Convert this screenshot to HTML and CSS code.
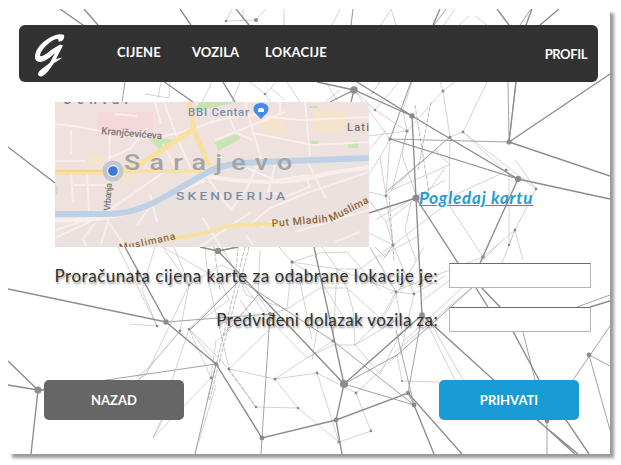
FILE: index.html
```html
<!DOCTYPE html>
<html lang="bs">
<head>
<meta charset="utf-8">
<title>Karta</title>
<link rel="stylesheet" href="styles.css">
</head>
<body>
<main class="panel">
  <svg class="network" viewBox="8 9 602 445" aria-hidden="true">
    <g class="faint">
      <path d="M226 21L256 20L266 9M226 21L232 9M284 9V25M243 9V20M332 25L340 9M353 9L351 25M381 25L391 9L396 25M444 25L455 9M459 25L469 16M475 16L487 25M223 82L235 102M212 82L202 102M161 82L158 98M170 82L169 98L145 94M240 82L232 102M250 82L265 94L271 102M265 94L271 88L276 82M271 88L285 100M287 82L300 102M326 82L338 102M340 90L325 102"/>
      <path d="M399 82L375 110L407 131L369 136M375 110L354 90M411 82L390 139L354 90M412 82L403 110L407 131L443 91L440 82M443 91L450 137L449 205L483 257M443 91L455 82M450 137L463 132L487 82M463 132L536 189L515 230L509 245L502 263M463 132L509 175L509 245M515 160L536 189M449 165L392 190L386 196L393 245L369 233M407 131L392 190M390 139L386 196L369 192M380 157L390 139M407 131L402 155L418 200M380 157L369 174M380 157L386 196M450 165L435 150L391 190M445 168L420 203M509 170L450 197M393 245L445 205M393 245L386 222L369 200M375 220L445 180M393 245L383 260M411 202L405 230L416 260M386 222L420 195M369 150L386 130M509 245L515 230L483 257L488 245M483 257L390 293M380 257L420 235M480 263L498 245M515 230L523 260"/>
      <path d="M118 247L157 326L129 324M189 285L146 375L137 380M180 331L139 380M180 331L149 367L136 378M155 247L142 290L157 326M189 329L172 380M163 247L189 285L180 331M189 285L221 265L246 276M189 285L174 247M163 247L220 280L229 300L189 329L216 364M189 329L221 360L256 407L298 408L275 379L317 373L356 393L371 431L339 442L317 373M298 408L339 442M205 247L208 280L220 330L229 369L275 379L333 341M229 369L269 330M222 247L240 280L246 295L287 309L292 262L279 247M292 262L337 269L396 292L414 294L445 276M337 269L322 247M337 269L335 305L333 341M287 309L320 288L347 288L337 269M287 309L270 314L258 295L218 340M307 358L270 320L240 280L210 308L189 329M307 358L333 345L355 345L397 320M355 345L380 374L402 330M355 345L353 310L347 288L380 318M397 355L402 381L439 382M397 355L356 393M396 292L370 247M396 292L380 320L355 345M414 294L393 245L360 269L337 269M414 294L400 355M424 247L383 318L344 318L320 280L292 262L320 253L347 252L380 290M153 438L211 378L216 340M184 380L153 438L162 418M211 378L189 329M195 454L216 385M370 247L396 292L402 330M375 247L385 257L393 245M423 300L450 280M394 353L471 288M404 341L462 288M428 325L455 380M432 325L463 380M260 250L258 295M268 320L250 315L240 300M318 325L312 360M300 282L312 340"/>
      <path class="dashed" d="M245 247L207 402M249 247L209 402M214 247L220 290M238 247L236 275M258 295L222 338M380 82L369 98M431 102L418 170M415 105L430 200M389 196L394 260M229 369L256 407"/>
    </g>
    <g class="medium">
      <path d="M434 25L446 9M520 25L531 9M516 82L509 142L508 82M411 82L390 139L509 142M390 139L518 179L509 175M450 137L386 192M390 139L518 179M240 280L333 341L414 405L396 330M240 280L190 330M270 314L262 438L261 454M218 251L238 247M414 405L408 393L422 315M344 384L414 405M166 322L270 314M216 364L38 390M216 364L195 454M344 384L397 355L472 288M523 332L535 380M610 326L573 380M589 355L610 366M589 355L610 430M547 421V454M577 307L610 295M125 82L122 102M351 25L353 9"/>
    </g>
    <g class="strong">
      <path d="M60 9L193 102M84 9L98 25M180 9L191 25M236 9L249 25M433 25L440 9M497 9L509 25M526 25L532 9M540 25L559 9M223 82L235 102M317 82L354 90L412 116L518 179L610 199M354 90L330 102M357 82L412 116L416 198L422 315M354 90L351 102M509 142L610 74M509 142L610 176M416 198L369 213M416 198L458 263L500 307L539 380L589 454M518 179L480 263M509 142L516 82M8 147L55 183M8 289L166 322L125 247M166 322L216 364L262 438L336 420L408 393L462 454M8 361L38 390L31 454M8 385L38 390H50M218 251L344 384L336 420L342 454M200 247L218 251L238 247M314 247L344 384L422 315L575 454M414 405L434 454M590 307L610 301M476 288L488 307M537 420L578 454"/>
      <g>
        <circle cx="354" cy="90" r="3.7"/><circle cx="412" cy="116" r="2.7"/><circle cx="509" cy="142" r="2.6"/><circle cx="518" cy="179" r="3.1"/><circle cx="416" cy="198" r="3.6"/><circle cx="166" cy="322" r="2.7"/><circle cx="38" cy="390" r="3.6"/><circle cx="218" cy="251" r="3.2"/><circle cx="344" cy="384" r="4"/><circle cx="422" cy="315" r="2.8"/><circle cx="270" cy="314" r="2"/><circle cx="336" cy="420" r="2.4"/><circle cx="262" cy="438" r="2.4"/><circle cx="414" cy="405" r="2.4"/><circle cx="408" cy="393" r="2.2"/><circle cx="589" cy="355" r="2.4"/><circle cx="547" cy="421" r="2.4"/><circle cx="216" cy="364" r="2"/><circle cx="256" cy="20" r="2"/>
        <circle cx="226" cy="21" r="1.3"/><circle cx="390" cy="139" r="1.7"/><circle cx="407" cy="131" r="1.6"/><circle cx="450" cy="137" r="1.5"/><circle cx="463" cy="132" r="1.4"/><circle cx="443" cy="91" r="1.5"/><circle cx="536" cy="189" r="1.4"/><circle cx="515" cy="230" r="1.4"/><circle cx="509" cy="245" r="1.3"/><circle cx="483" cy="257" r="1.8"/><circle cx="393" cy="245" r="1.6"/><circle cx="386" cy="196" r="1.4"/><circle cx="506" cy="170" r="1.5"/><circle cx="157" cy="326" r="1.3"/><circle cx="180" cy="331" r="1.4"/><circle cx="189" cy="329" r="1.3"/><circle cx="189" cy="285" r="1.4"/><circle cx="211" cy="378" r="1.4"/><circle cx="292" cy="262" r="1.7"/><circle cx="339" cy="442" r="1.6"/><circle cx="371" cy="431" r="1.4"/><circle cx="356" cy="393" r="1.4"/><circle cx="317" cy="373" r="1.4"/><circle cx="275" cy="379" r="1.5"/><circle cx="229" cy="369" r="1.4"/><circle cx="256" cy="407" r="1.3"/><circle cx="298" cy="408" r="1.3"/><circle cx="333" cy="341" r="1.5"/><circle cx="396" cy="292" r="1.4"/><circle cx="414" cy="294" r="1.4"/><circle cx="402" cy="381" r="1.1"/><circle cx="265" cy="94" r="1.3"/><circle cx="375" cy="110" r="1.2"/>
      </g>
    </g>
  </svg>

  <header class="navbar">
    <svg class="logo" viewBox="0 0 32 46" role="img" aria-label="G">
      <path d="M30 4C31 9 28 11 24.500 10.500C25 8 23.500 7 20 8.800C13 12.500 6.500 20 6 24.500C7 27 14 22 17 19L26 13.500L29 14.500L22 28L28 26.500C25 29.500 22.500 30.500 20 32C17 36 12 44.500 7.500 45.500C4 46 3 42.500 5.500 40C9 36.500 13.500 34 16 31.500L21 22C15 28 8 32.500 3.500 30.500C-1 28 1 20.500 5.500 15C12 7.500 24 1 30 4Z" fill="#fff"/>
    </svg>
    <nav class="links">
      <a class="cijene">CIJENE</a>
      <a class="vozila">VOZILA</a>
      <a class="lokacije">LOKACIJE</a>
    </nav>
    <a class="profile">PROFIL</a>
  </header>

  <section class="location">
    <svg class="map" viewBox="0 0 314 145" role="img" aria-label="Sarajevo">
      <rect width="314" height="145" fill="#ebe2df"/>
      <path d="M0 0H314V52L190 57L150 72L100 96L0 113Z" fill="#efe2de"/>
      <path d="M42 10H98V34H42Z" fill="#f3d9da"/>
      <path d="M205 15h25v17h-25zM259 8h33v23h-33zM32 53h18v10H32zM58 72h22v9H58z" fill="#f4e4ce"/>
      <path d="M93 36L123 38L106 49ZM138 10L183 0H145ZM160 40L184 31L185 37L163 49ZM252 38l11 1v3h-11zM293 40l10-1v7h-10zM0 82l3 3v8H0zM254 4h9v2h-9z" fill="#c8e4b3"/>
      <g fill="none" stroke="#f9eeeb" stroke-width="2">
        <path d="M0 22C40 25 54 34 93 36C130 33 148 21 187 12L246 18L314 15M55 31L53 119M54 56L75 47L92 26M100 0L106 22M109 0L123 38M60 12L82 14M123 38L136 67M108 42L121 67M16 73L18 99M32 72L34 110M18 83H52M0 136L34 120L53 109L112 68M0 128L50 112M40 121L28 137L32 145M53 119L46 142M53 119L70 145M100 98L82 123M150 72L176 108L192 86L206 55L198 30L190 0M154 20L194 12M160 38L230 10M225 0V13M250 0L255 54M170 5L181 31L198 38M197 31L258 43L314 40M192 66L220 78L255 73M251 57L271 97M221 59L213 90L231 94L255 85L250 73M192 125L215 106L252 91L314 70M206 125L222 117M191 133L198 143M240 130L290 115L314 108M145 145L172 126L196 110M147 115L166 145M280 140L305 130M95 92L102 120M16 52V28M0 59H30"/>
        <path d="M145 73C170 78 230 86 270 72L314 65" stroke-width="4"/>
        <path d="M0 118C85 121 100 95 150 78" stroke-width="4"/>
      </g>
      <path d="M0 112H53C90 112 116 90 148 73C166 61 187 61 207 60L314 56" fill="none" stroke="#bdd1e6" stroke-width="6"/>
      <g fill="none" stroke="#f7e0a0">
        <path d="M0 70H58C94 63 114 41 139 27L134 0M138 26L154 64" stroke-width="5"/>
        <path d="M55 69H148" stroke-width="3.500"/>
        <path d="M112 138L150 131C178 120 195 123 222 122" stroke-width="4"/>
        <path d="M0 69H50" stroke="#efcd79" stroke-width="1"/>
      </g>
      <g class="map-labels">
        <text x="8" y="2" font-size="13" font-weight="700" fill="#777" textLength="66">Centar</text>
        <text x="133" y="14" font-size="11.500" fill="#7590b1" textLength="61">BBI Centar</text>
        <text x="292" y="29" font-size="11" fill="#6e7277" textLength="22">Lati</text>
        <text transform="translate(46 32) rotate(5)" font-size="10" fill="#777" textLength="61">Kranjčevićeva</text>
        <text class="spaced" transform="translate(69 68) scale(1.22 1)" font-size="22" fill="#a4a3a5" textLength="138">Sarajevo</text>
        <text class="spaced" transform="translate(121 98) scale(1.2 1)" font-size="11.500" fill="#7d8da5" textLength="91">SKENDERIJA</text>
        <text transform="translate(55 109) rotate(-86)" font-size="9" fill="#777" textLength="28">Vrbanja</text>
        <text transform="translate(65 149) rotate(-12)" font-size="10" fill="#8d6738" textLength="57">Muslimana</text>
        <text transform="translate(217 125) rotate(-5)" font-size="10.500" fill="#8d6738" textLength="56">Put Mladih</text>
        <text transform="translate(276 120) rotate(-27)" font-size="10.500" fill="#8d6738" textLength="43">Muslima</text>
      </g>
      <circle cx="58" cy="69" r="10.500" fill="#b5bfd1" opacity=".8"/>
      <circle cx="58" cy="69" r="6" fill="#f5f5f5"/>
      <circle cx="58" cy="69" r="4.800" fill="#3878dc"/>
      <path d="M206 17L202 13C196 8 198 1 206 1S216 8 210 13Z" fill="#468bea"/>
      <path d="M203 8l1-2h4l1 2v2h-6z" fill="#fff"/>
    </svg>
    <a class="map-link">Pogledaj kartu</a>
  </section>

  <form class="details">
    <label class="field"><span class="price-label">Proračunata cijena karte za odabrane lokacije je:</span><input type="text"></label>
    <label class="field"><span class="arrival-label">Predviđeni dolazak vozila za:</span><input type="text"></label>
    <div class="actions">
      <button type="button" class="back">NAZAD</button>
      <button type="button" class="accept">PRIHVATI</button>
    </div>
  </form>
</main>
</body>
</html>
```
FILE: styles.css
```css
* { box-sizing: border-box; }

body {
  margin: 0;
  padding: 9px 11px 11px 8px;
  background: #fff;
  font-family: Lato, "Liberation Sans", sans-serif;
  overflow: hidden;
}

.panel {
  position: relative;
  isolation: isolate;
  width: 602px;
  height: 445px;
  padding-top: 16px;
  background: #fff;
  box-shadow: 4px 4px 3px rgba(0, 0, 0, .4);
}

.network {
  position: absolute;
  inset: 0;
  z-index: -1;
  width: 602px;
  height: 445px;
}

.network path { fill: none; }
.faint { stroke: #b6b6b6; stroke-width: .6; }
.faint .dashed { stroke: #8e8e8e; stroke-dasharray: 4 1.5; }
.medium { stroke: #999; stroke-width: .9; }
.strong path { stroke: #8c8c8c; stroke-width: 1.35; }
.strong circle { fill: #8c8c8c; }

.navbar {
  display: flex;
  align-items: center;
  width: 579px;
  height: 57px;
  margin-left: 11px;
  padding: 0 11px 0 15px;
  border-radius: 6px;
  background: #323232;
  color: #fff;
  font-size: 13px;
  font-weight: 700;
  line-height: 16px;
}

.logo { width: 32px; height: 46px; }
.links { display: flex; margin-left: 51px; padding-bottom: 3px; }
.cijene { width: 75px; letter-spacing: .15px; }
.vozila { width: 73px; letter-spacing: .1px; }
.lokacije { letter-spacing: .25px; }
.profile { margin-left: auto; letter-spacing: -.4px; }

.location {
  display: flex;
  height: 145px;
  margin: 20px 0 0 47px;
}

.map { width: 314px; height: 145px; overflow: hidden; }
.map-labels { font-family: Roboto, sans-serif; }
.map-labels text { font-weight: 500; }
.map-labels text:not(.spaced) { -webkit-text-stroke: 0; }

.map-link {
  margin: 85px 0 0 50px;
  color: #269bd0;
  font-size: 17px;
  font-style: italic;
  font-weight: 700;
  letter-spacing: .77px;
  line-height: 21px;
  text-decoration: underline;
  white-space: nowrap;
}

.details {
  display: flex;
  flex-direction: column;
  gap: 19px;
  margin-top: 16px;
}

.field {
  display: flex;
  align-items: center;
  justify-content: flex-end;
  gap: 11px;
  height: 25px;
  margin-right: 19px;
  color: #303030;
  font-size: 17px;
  text-shadow: 1px 2px 2px rgba(0, 0, 0, .4);
  white-space: nowrap;
}

.price-label { letter-spacing: .54px; }
.arrival-label { letter-spacing: .37px; }

.field input {
  width: 142px;
  height: 25px;
  border: 1px solid #b5b5b5;
  border-top: 1px solid #6c6c6c;
  background: #fff;
}

.actions {
  display: flex;
  justify-content: space-between;
  margin: 29px 31px 0 36px;
}

.actions button {
  width: 140px;
  height: 40px;
  padding: 0;
  border: 0;
  border-radius: 5px;
  color: #fff;
  font: 700 13px Lato, sans-serif;
}

.actions .back { background: #666; }
.actions .accept { background: #199bd5; }
```
